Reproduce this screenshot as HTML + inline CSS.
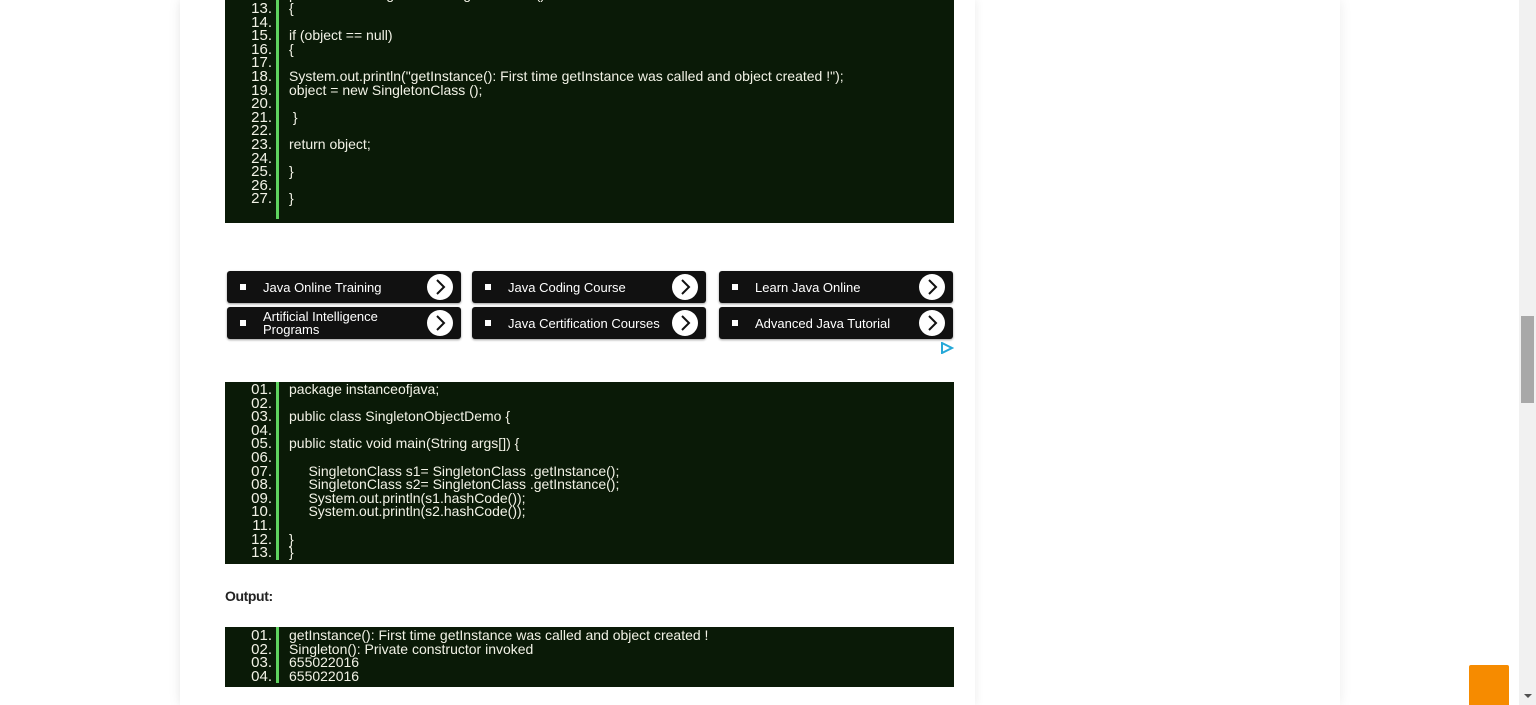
<!DOCTYPE html>
<html><head><meta charset="utf-8"><style>
html,body{margin:0;padding:0;width:1536px;height:705px;overflow:hidden;background:#fff;font-family:"Liberation Sans",sans-serif;}
.wrap{position:absolute;left:180px;top:0;width:1160px;height:705px;background:#fff;box-shadow:0 0 12px rgba(0,0,0,.08);}
.main{position:absolute;left:180px;top:0;width:795px;height:705px;box-shadow:2px 0 8px rgba(0,0,0,.06);}
.code{position:absolute;left:225px;width:729px;background:#0a1a07;overflow:hidden;color:#f2f2e6;font-family:"Liberation Sans",sans-serif;font-size:14px;letter-spacing:0;}
.code .g{position:absolute;left:51px;top:0;bottom:4px;width:3px;background:#5fd35f;}
.ln{position:absolute;left:0;height:13.6px;line-height:13.6px;white-space:pre;}
.ln .n{position:absolute;left:0;width:47px;text-align:right;font-size:15px;}
.ln .t{position:absolute;left:64px;}
.ad{position:absolute;width:234px;height:32px;background:#111;border-radius:3px;color:#fff;font-size:13px;box-shadow:0 1px 2px rgba(0,0,0,.4);}
.ad .b{position:absolute;left:13px;top:13px;width:6px;height:6px;background:#fff;}
.ad .l{position:absolute;left:36px;top:0;height:32px;display:flex;align-items:center;line-height:13px;}
.ad .c{position:absolute;right:8px;top:3px;width:26px;height:26px;border-radius:50%;background:#fff;}
.ad .c svg{position:absolute;left:0;top:0}
</style></head><body>
<div class="wrap"></div><div class="main"></div>

<div class="code" style="top:-30px;height:253px">
<div class="g"></div>
<div class="ln" style="top:4.8px"><span class="n">11.</span><span class="t"></span></div>
<div class="ln" style="top:18.4px"><span class="n">12.</span><span class="t">public static SingletonClass getInstance()</span></div>
<div class="ln" style="top:32px"><span class="n">13.</span><span class="t">{</span></div>
<div class="ln" style="top:45.6px"><span class="n">14.</span></div>
<div class="ln" style="top:59.2px"><span class="n">15.</span><span class="t">if (object == null)</span></div>
<div class="ln" style="top:72.8px"><span class="n">16.</span><span class="t">{</span></div>
<div class="ln" style="top:86.4px"><span class="n">17.</span></div>
<div class="ln" style="top:100px"><span class="n">18.</span><span class="t">System.out.println("getInstance(): First time getInstance was called and object created !");</span></div>
<div class="ln" style="top:113.6px"><span class="n">19.</span><span class="t">object = new SingletonClass ();</span></div>
<div class="ln" style="top:127.2px"><span class="n">20.</span></div>
<div class="ln" style="top:140.8px"><span class="n">21.</span><span class="t"> }</span></div>
<div class="ln" style="top:154.4px"><span class="n">22.</span></div>
<div class="ln" style="top:168px"><span class="n">23.</span><span class="t">return object;</span></div>
<div class="ln" style="top:181.6px"><span class="n">24.</span></div>
<div class="ln" style="top:195.2px"><span class="n">25.</span><span class="t">}</span></div>
<div class="ln" style="top:208.8px"><span class="n">26.</span></div>
<div class="ln" style="top:222.4px"><span class="n">27.</span><span class="t">}</span></div>
</div>

<div class="ad" style="left:227px;top:271px"><span class="b"></span><span class="l">Java Online Training</span><span class="c"><svg width="26" height="26"><path d="M10 6l7 7-7 7" stroke="#111" stroke-width="2" fill="none"/></svg></span></div>
<div class="ad" style="left:472px;top:271px"><span class="b"></span><span class="l">Java Coding Course</span><span class="c"><svg width="26" height="26"><path d="M10 6l7 7-7 7" stroke="#111" stroke-width="2" fill="none"/></svg></span></div>
<div class="ad" style="left:719px;top:271px"><span class="b"></span><span class="l">Learn Java Online</span><span class="c"><svg width="26" height="26"><path d="M10 6l7 7-7 7" stroke="#111" stroke-width="2" fill="none"/></svg></span></div>
<div class="ad" style="left:227px;top:307px"><span class="b"></span><span class="l">Artificial Intelligence<br>Programs</span><span class="c"><svg width="26" height="26"><path d="M10 6l7 7-7 7" stroke="#111" stroke-width="2" fill="none"/></svg></span></div>
<div class="ad" style="left:472px;top:307px"><span class="b"></span><span class="l">Java Certification Courses</span><span class="c"><svg width="26" height="26"><path d="M10 6l7 7-7 7" stroke="#111" stroke-width="2" fill="none"/></svg></span></div>
<div class="ad" style="left:719px;top:307px"><span class="b"></span><span class="l">Advanced Java Tutorial</span><span class="c"><svg width="26" height="26"><path d="M10 6l7 7-7 7" stroke="#111" stroke-width="2" fill="none"/></svg></span></div>
<svg style="position:absolute;left:940px;top:342px" width="14" height="12"><path d="M2 1l10 5-10 5z" fill="none" stroke="#25a8d8" stroke-width="2"/></svg>

<div class="code" style="top:382px;height:182px">
<div class="g"></div>
<div class="ln" style="top:1px"><span class="n">01.</span><span class="t">package instanceofjava;</span></div>
<div class="ln" style="top:14.6px"><span class="n">02.</span></div>
<div class="ln" style="top:28.2px"><span class="n">03.</span><span class="t">public class SingletonObjectDemo {</span></div>
<div class="ln" style="top:41.8px"><span class="n">04.</span></div>
<div class="ln" style="top:55.4px"><span class="n">05.</span><span class="t">public static void main(String args[]) {</span></div>
<div class="ln" style="top:69px"><span class="n">06.</span></div>
<div class="ln" style="top:82.6px"><span class="n">07.</span><span class="t">     SingletonClass s1= SingletonClass .getInstance();</span></div>
<div class="ln" style="top:96.2px"><span class="n">08.</span><span class="t">     SingletonClass s2= SingletonClass .getInstance();</span></div>
<div class="ln" style="top:109.8px"><span class="n">09.</span><span class="t">     System.out.println(s1.hashCode());</span></div>
<div class="ln" style="top:123.4px"><span class="n">10.</span><span class="t">     System.out.println(s2.hashCode());</span></div>
<div class="ln" style="top:137px"><span class="n">11.</span></div>
<div class="ln" style="top:150.6px"><span class="n">12.</span><span class="t">}</span></div>
<div class="ln" style="top:164.2px"><span class="n">13.</span><span class="t">}</span></div>
</div>

<div style="position:absolute;left:225px;top:588px;font-size:14px;font-weight:bold;color:#222;letter-spacing:-0.4px">Output:</div>

<div class="code" style="top:627px;height:60px">
<div class="g"></div>
<div class="ln" style="top:2px"><span class="n">01.</span><span class="t">getInstance(): First time getInstance was called and object created !</span></div>
<div class="ln" style="top:15.6px"><span class="n">02.</span><span class="t">Singleton(): Private constructor invoked</span></div>
<div class="ln" style="top:29.2px"><span class="n">03.</span><span class="t">655022016</span></div>
<div class="ln" style="top:42.8px"><span class="n">04.</span><span class="t">655022016</span></div>
</div>

<div style="position:absolute;left:1469px;top:665px;width:40px;height:40px;background:#f68b00;border-radius:2px 2px 0 0"></div>
<div style="position:absolute;left:1519px;top:0;width:17px;height:705px;background:#f1f1f1"></div>
<div style="position:absolute;left:1521px;top:316px;width:13px;height:87px;background:#a8a8a8"></div>
<svg style="position:absolute;left:1523px;top:692px" width="10" height="8"><path d="M1 2h8l-4 4z" fill="#505050"/></svg>
</body></html>
